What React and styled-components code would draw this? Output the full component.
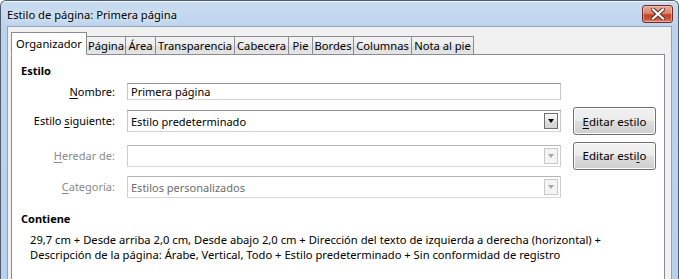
import React from "react";
import styled, { createGlobalStyle } from "styled-components";

const Global = createGlobalStyle`
  html, body { margin: 0; padding: 0; background: #ffffff; }
  body { font-family: "Noto Sans", "Open Sans", sans-serif; font-size: 11px; color: #000; }
  * { box-sizing: border-box; }
`;

const Window = styled.div`
  width: 679px;
  height: 279px;
  overflow: hidden;
  display: flex;
  flex-direction: column;
  border: 1px solid #4f5d70;
  border-bottom: none;
  border-radius: 6px 6px 0 0;
  background: linear-gradient(180deg, #c9dcf1 0%, #bcd3ec 30px, #b9d1ea 100%);
`;

const TitleBar = styled.div`
  height: 25px;
  flex: none;
  display: flex;
  align-items: flex-start;
  justify-content: space-between;
  padding: 0 5px 0 6px;
  box-shadow: inset 0 1px 0 rgba(255, 255, 255, 0.75);
  border-radius: 5px 5px 0 0;
`;

const Title = styled.div`
  font-size: 11.2px;
  line-height: 16px;
  margin-top: 6px;
  color: #000;
  text-shadow: 0 0 6px rgba(255, 255, 255, 0.9), 0 0 10px rgba(255, 255, 255, 0.6);
`;

const CloseButton = styled.div`
  margin-top: 4px;
  width: 31px;
  height: 18px;
  border: 1px solid #6e2c22;
  border-radius: 3px;
  display: flex;
  align-items: center;
  justify-content: center;
  background: linear-gradient(180deg, #e8a596 0%, #d98672 45%, #c4412a 55%, #c9523a 80%, #dd8a6c 100%);
  box-shadow: inset 0 0 0 1px rgba(255, 220, 210, 0.45);
`;

const Client = styled.div`
  flex: 1;
  margin: 0 6px 0 6px;
  border: 1px solid #8ea4bd;
  border-bottom: none;
  background: #f0f0f0;
  padding: 5px 6px 0 3px;
  display: flex;
  flex-direction: column;
`;

const TabStrip = styled.div`
  display: flex;
  align-items: flex-end;
  height: 23px;
  position: relative;
  z-index: 1;
  margin-bottom: -1px;
`;

const Tab = styled.div`
  width: ${(p) => p.$w}px;
  height: ${(p) => (p.$active ? 23 : 19)}px;
  margin-left: ${(p) => (p.$first ? 0 : -1)}px;
  border: 1px solid #898c95;
  border-bottom: ${(p) => (p.$active ? "1px solid #ffffff" : "1px solid #898c95")};
  background: ${(p) =>
    p.$active ? "#ffffff" : "linear-gradient(180deg, #f3f3f3 0%, #ebebeb 50%, #dedede 51%, #e4e4e4 100%)"};
  position: relative;
  z-index: ${(p) => (p.$active ? 2 : 1)};
  font-size: 11.2px;
  line-height: 16px;
  padding-top: ${(p) => (p.$active ? 3 : 1)}px;
  text-align: center;
  white-space: nowrap;
`;

const Panel = styled.div`
  flex: 1;
  background: #ffffff;
  border: 1px solid #898c95;
  border-bottom: none;
  padding: 8px 7px 0 9px;
`;

const Heading = styled.div`
  font-weight: bold;
  font-size: 11px;
  line-height: 16px;
`;

const Grid = styled.div`
  display: grid;
  grid-template-columns: 94px 434px 83px;
  column-gap: 12px;
  grid-template-rows: 17px 28px 27px 22px;
  row-gap: 7px;
  margin-top: 4px;
  align-items: center;
`;

const Label = styled.div`
  text-align: right;
  white-space: nowrap;
  color: ${(p) => (p.$disabled ? "#8a8a8a" : "#000")};
  line-height: 16px;
`;

const U = styled.span`
  text-decoration: underline;
  text-underline-offset: 2px;
`;

const TextInput = styled.div`
  height: 17px;
  border: 1px solid #abadb3;
  border-color: #8f9297 #c4c6cc #d0d3d8 #c4c6cc;
  background: #fff;
  padding: 0 3px;
  line-height: 15px;
`;

const Combo = styled.div`
  height: 22px;
  border: 1px solid;
  border-color: ${(p) => (p.$disabled ? "#b5b5b5 #cfcfcf #d8d8d8 #cfcfcf" : "#8f9297 #c4c6cc #d0d3d8 #c4c6cc")};
  background: #fff;
  display: flex;
  align-items: center;
  justify-content: space-between;
  padding: 0 2px 0 3px;
  color: ${(p) => (p.$disabled ? "#6d6d6d" : "#000")};
`;

const DropButton = styled.div`
  width: 14px;
  height: 16px;
  border: 1px solid ${(p) => (p.$disabled ? "#c9c9c9" : "#707070")};
  background: ${(p) =>
    p.$disabled ? "#f4f4f4" : "linear-gradient(180deg, #f6f6f6 0%, #e9e9e9 50%, #dcdcdc 51%, #d4d4d4 100%)"};
  display: flex;
  align-items: center;
  justify-content: center;
`;

const Triangle = styled.div`
  width: 0;
  height: 0;
  border-left: 3.5px solid transparent;
  border-right: 3.5px solid transparent;
  border-top: 4px solid ${(p) => (p.$disabled ? "#a8a8a8" : "#000")};
`;

const Button = styled.div`
  height: ${(p) => p.$h}px;
  border: 1px solid #707070;
  border-radius: 3px;
  background: linear-gradient(180deg, #f2f2f2 0%, #ebebeb 50%, #dddddd 51%, #cfcfcf 100%);
  box-shadow: inset 0 0 0 1px #fbfbfb;
  display: flex;
  align-items: center;
  justify-content: center;
  font-size: 11.5px;
  white-space: nowrap;
`;

const ContentsBlock = styled.div`
  margin-top: 13px;
`;

const Description = styled.div`
  margin-top: 5px;
  padding-left: 9px;
  line-height: 15px;
  font-size: 11.2px;
  white-space: nowrap;
`;

const tabs = [
  { label: "Organizador", w: 76, active: true },
  { label: "Página", w: 40 },
  { label: "Área", w: 31 },
  { label: "Transparencia", w: 80 },
  { label: "Cabecera", w: 55 },
  { label: "Pie", w: 25 },
  { label: "Bordes", w: 42 },
  { label: "Columnas", w: 59 },
  { label: "Nota al pie", w: 63 },
];

function Combobox({ value, disabled }) {
  return (
    <Combo $disabled={disabled}>
      <span>{value}</span>
      <DropButton $disabled={disabled}>
        <Triangle $disabled={disabled} />
      </DropButton>
    </Combo>
  );
}

export default function App() {
  return (
    <>
      <Global />
      <Window>
        <TitleBar>
          <Title>Estilo de página: Primera página</Title>
          <CloseButton>
            <svg width="14" height="12" viewBox="0 0 14 12">
              <path d="M2 1.5 L12 10.5 M12 1.5 L2 10.5" stroke="#5a2a22" strokeWidth="4" strokeLinecap="square" />
              <path d="M2 1.5 L12 10.5 M12 1.5 L2 10.5" stroke="#ffffff" strokeWidth="2.2" strokeLinecap="square" />
            </svg>
          </CloseButton>
        </TitleBar>
        <Client>
          <TabStrip>
            {tabs.map((t, i) => (
              <Tab key={t.label} $w={t.w} $active={t.active} $first={i === 0}>
                {t.label}
              </Tab>
            ))}
          </TabStrip>
          <Panel>
            <Heading>Estilo</Heading>
            <Grid>
              <Label>
                <U>N</U>ombre:
              </Label>
              <TextInput>Primera página</TextInput>
              <div />

              <Label>
                Estilo <U>s</U>iguiente:
              </Label>
              <Combobox value="Estilo predeterminado" />
              <Button $h={28}>
                <U>E</U>ditar estilo
              </Button>

              <Label $disabled>
                <U>H</U>eredar de:
              </Label>
              <Combobox value="" disabled />
              <Button $h={28}>
                Editar esti<U>l</U>o
              </Button>

              <Label $disabled>
                <U>C</U>ategoría:
              </Label>
              <Combobox value="Estilos personalizados" disabled />
              <div />
            </Grid>
            <ContentsBlock>
              <Heading>Contiene</Heading>
              <Description>
                29,7 cm + Desde arriba 2,0 cm, Desde abajo 2,0 cm + Dirección del texto de izquierda a derecha (horizontal) +
                <br />
                Descripción de la página: Árabe, Vertical, Todo + Estilo predeterminado + Sin conformidad de registro
              </Description>
            </ContentsBlock>
          </Panel>
        </Client>
      </Window>
    </>
  );
}
